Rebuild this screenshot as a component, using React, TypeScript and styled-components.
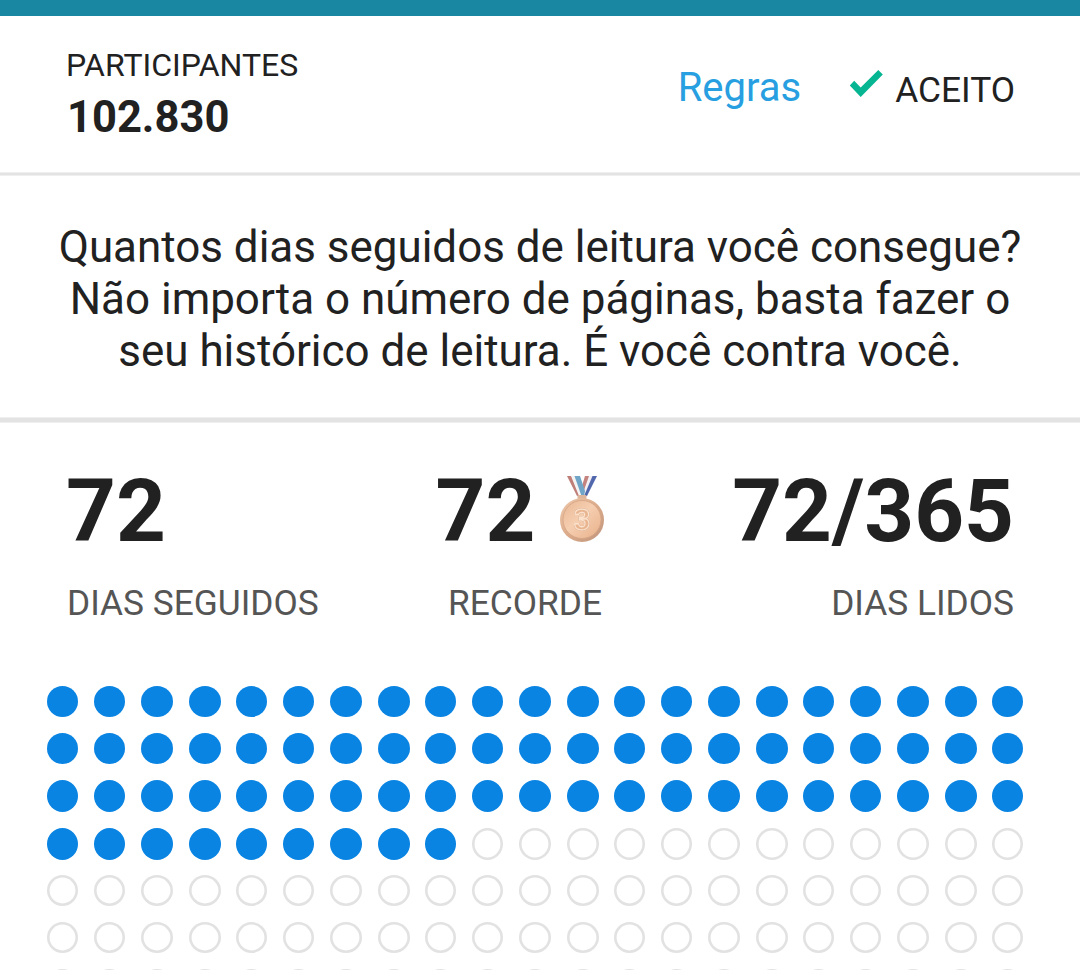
import React from "react";
import styled, { createGlobalStyle } from "styled-components";

const Global = createGlobalStyle`
  * { box-sizing: border-box; }
  html, body { margin: 0; background: #fff; }
  body { font-family: Roboto, sans-serif; color: #212121; overflow: hidden; }
`;

const Page = styled.main`
  width: 1080px;
  height: 970px;
  overflow: hidden;
  background: #fff;
`;
const TopBar = styled.div`
  height: 16px;
  background: #1a87a2;
`;
const Header = styled.header`
  display: flex;
  justify-content: space-between;
  height: 156px;
  padding: 29px 65px 0 66px;
`;
const Divider = styled.div<{ $size: number }>`
  height: ${(p) => p.$size}px;
  background: #e3e3e3;
  border: solid #efefef;
  border-width: 1px 0;
`;
const Participants = styled.div`
  display: flex;
  flex-direction: column;
`;
const Caption = styled.span`
  font-size: 32px;
  line-height: 40px;
`;
const Count = styled.strong`
  font-size: 43.5px;
  line-height: 52px;
  margin: 7px 0 0 1px;
`;
const Actions = styled.div`
  display: flex;
  align-items: flex-start;
`;
const Rules = styled.a`
  margin-top: 19px;
  color: #289fe0;
  font-size: 40px;
  line-height: 48px;
`;
const Check = styled.svg`
  width: 34px;
  height: 28px;
  margin: 25px 0 0 48px;
`;
const Accepted = styled.span`
  margin: 24px 0 0 12px;
  font-size: 35.3px;
  line-height: 42px;
`;
const Intro = styled.p`
  height: 241px;
  margin: 0;
  padding: 45px 0 0;
  font-size: 43.95px;
  line-height: 52px;
  text-align: center;
`;
const Stats = styled.section`
  display: grid;
  grid-template-columns: 300px 316px 331px;
  height: 263px;
  padding: 38px 66px 0 67px;
`;
const Stat = styled.div<{ $align: string }>`
  display: flex;
  flex-direction: column;
  align-items: ${(p) => p.$align};
`;
const Value = styled.div<{ $outdent?: boolean }>`
  display: flex;
  margin-left: ${(p) => (p.$outdent ? "-1px" : "0")};
  font-size: 87px;
  font-weight: 700;
  line-height: 100px;
`;
const Label = styled.div`
  margin-top: 22px;
  color: #555;
  font-size: 35.3px;
  line-height: 40px;
`;
const MedalIcon = styled.svg`
  width: 48px;
  height: 70px;
  margin: 14px 8px 0 23px;
`;
const MedalNumber = styled.text`
  font-size: 29px;
  font-weight: 700;
  fill: #e9b590;
  stroke: #fbe2cd;
  stroke-width: 1.3px;
  stroke-linejoin: round;
  filter: drop-shadow(0.5px 0.5px 0.6px #b27a5a);
`;
const Days = styled.section`
  display: grid;
  grid-template-columns: repeat(5, 47px 47px 48px 47px) 31px;
  grid-template-rows: 47px 47px 48px 47px 47px 47px 31px;
  padding-left: 47px;
`;
const Day = styled.i<{ $read: boolean; $wide: boolean; $tall: boolean }>`
  width: ${(p) => (p.$wide ? 32 : 31)}px;
  height: ${(p) => (p.$tall ? 32 : 31)}px;
  border-radius: 50%;
  background: ${(p) => (p.$read ? "#0984e3" : "#fff")};
  box-shadow: ${(p) => (p.$read ? "none" : "inset 0 0 0 2.6px #e2e2e2")};
`;

const Medal = () => (
  <MedalIcon viewBox="0 0 48 70">
    <defs>
      <linearGradient id="rim" x1="0" y1="0" x2="1" y2="1">
        <stop offset="0" stopColor="#efc9ad" />
        <stop offset="0.5" stopColor="#dbab8a" />
        <stop offset="1" stopColor="#c0957d" />
      </linearGradient>
      <linearGradient id="face" x1="0" y1="0" x2="1" y2="1">
        <stop offset="0" stopColor="#e9b894" />
        <stop offset="0.45" stopColor="#f5ceb0" />
        <stop offset="1" stopColor="#e9b08a" />
      </linearGradient>
    </defs>
    <path d="M27 1h4.500L25 21h-4Z" fill="#c4837e" />
    <path d="M31 1h4L27 21h-3Z" fill="#f3f1f5" />
    <path d="M34.500 1H39L29 21h-3Z" fill="#5268ad" />
    <path d="M9 1h4.500l8.500 20h-3Z" fill="#bf7f78" />
    <path d="M13 1h4l7 20h-3Z" fill="#f6f3f3" />
    <path d="M16.500 1h5.500l5 15-1 5h-2.500Z" fill="#70a5c8" />
    <rect x="19.500" y="20" width="9" height="4" rx="1" fill="#ddb59b" />
    <circle cx="24" cy="45" r="22" fill="url(#rim)" />
    <circle cx="24" cy="44.500" r="19" fill="url(#face)" stroke="#d5a384" strokeWidth="0.8" />
    <MedalNumber x="24" y="54.500" textAnchor="middle">3</MedalNumber>
  </MedalIcon>
);

const COLUMNS = 21;
const VISIBLE_DAYS = 147;
const READ_DAYS = 72;

export default function App() {
  return (
    <Page>
      <Global />
      <TopBar />
      <Header>
        <Participants>
          <Caption>PARTICIPANTES</Caption>
          <Count>102.830</Count>
        </Participants>
        <Actions>
          <Rules>Regras</Rules>
          <Check viewBox="0 0 34 28">
            <path d="M5.200 10.800L0.800 15.500L11.700 27L33.800 4.500L29.300 0L11.700 17.500Z" fill="#06b592" />
          </Check>
          <Accepted>ACEITO</Accepted>
        </Actions>
      </Header>
      <Divider $size={4} />
      <Intro>
        Quantos dias seguidos de leitura você consegue?<br />
        Não importa o número de páginas, basta fazer o<br />
        seu histórico de leitura. É você contra você.
      </Intro>
      <Divider $size={6} />
      <Stats>
        <Stat $align="flex-start"><Value $outdent>72</Value><Label>DIAS SEGUIDOS</Label></Stat>
        <Stat $align="center"><Value>72<Medal /></Value><Label>RECORDE</Label></Stat>
        <Stat $align="flex-end"><Value>72/365</Value><Label>DIAS LIDOS</Label></Stat>
      </Stats>
      <Days>
        {Array.from({ length: VISIBLE_DAYS }, (_, i) => {
          const row = Math.floor(i / COLUMNS);
          return (
            <Day
              key={i}
              $read={i < READ_DAYS}
              $wide={(i % COLUMNS) % 4 >= 2}
              $tall={row === 2 || row === 3}
            />
          );
        })}
      </Days>
    </Page>
  );
}
